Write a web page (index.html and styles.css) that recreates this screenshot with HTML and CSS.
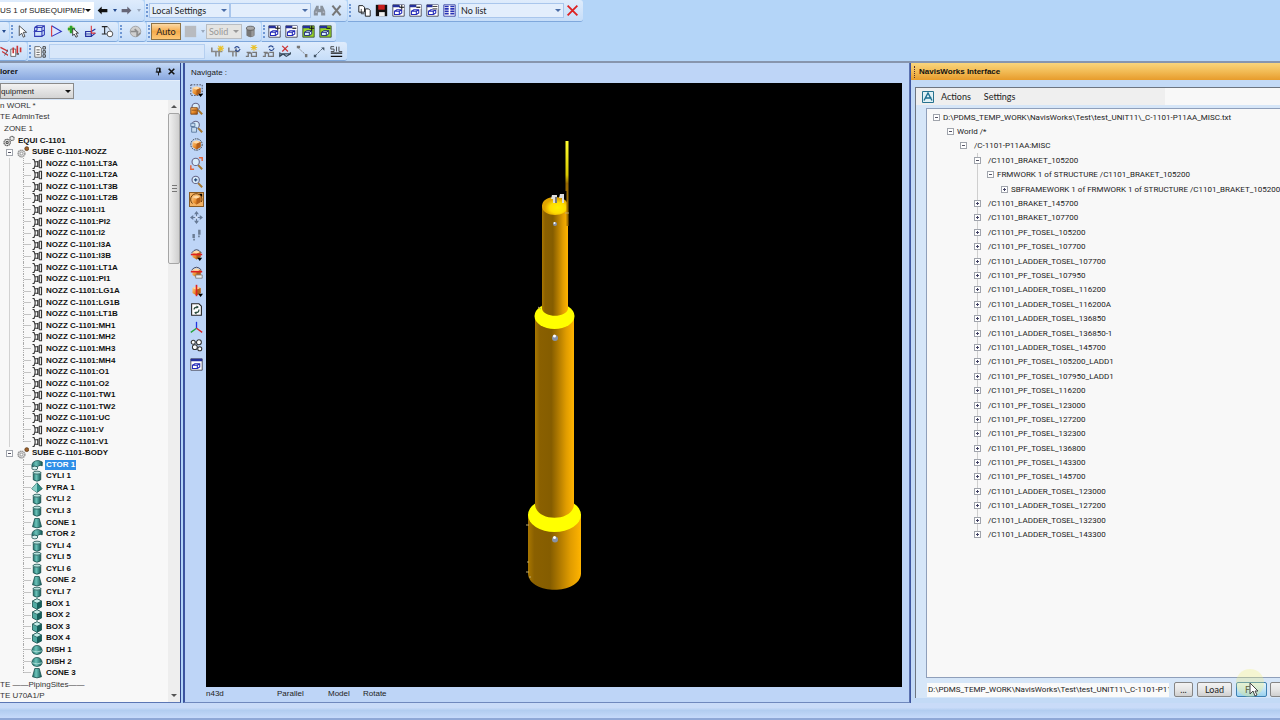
FILE: index.html
```html
<!DOCTYPE html>
<html lang="en">
<head>
  <meta charset="utf-8">
  <title>NavisWorks Interface</title>
  <link rel="stylesheet" href="styles.css">
</head>
<body>

<!-- icon set -->
<svg class="defs" aria-hidden="true">
  <defs>
    <linearGradient id="teal"><stop offset="0" stop-color="#1d6c68"/><stop offset=".4" stop-color="#6cc4ba"/><stop offset="1" stop-color="#145a58"/></linearGradient>
    <linearGradient id="orange" x2="1" y2="1"><stop offset="0" stop-color="#ffd59a"/><stop offset=".5" stop-color="#ea8f2e"/><stop offset="1" stop-color="#a3500f"/></linearGradient>
    <linearGradient id="steel"><stop offset="0" stop-color="#a87600"/><stop offset=".12" stop-color="#8a6000"/><stop offset=".42" stop-color="#855d00"/><stop offset=".6" stop-color="#b07a00"/><stop offset=".8" stop-color="#e09c00"/><stop offset="1" stop-color="#ffb400"/></linearGradient>
    <radialGradient id="dome" cx=".6" cy=".6"><stop offset="0" stop-color="#fff000"/><stop offset=".6" stop-color="#ffdc00"/><stop offset="1" stop-color="#e0a400"/></radialGradient>
    <linearGradient id="mast" x2="0" y2="1"><stop offset="0" stop-color="#ffff30"/><stop offset=".4" stop-color="#d8c800"/><stop offset=".5" stop-color="#946600"/><stop offset="1" stop-color="#a87400"/></linearGradient>
  </defs>
  <symbol id="back" viewBox="0 0 16 16"><path d="M2 8l5-5v3h7v4H7v3z" fill="#111"/></symbol>
  <symbol id="fwd" viewBox="0 0 16 16"><path d="M14 8L9 3v3H2v4h7v3z" fill="#667"/></symbol>
  <symbol id="binoc" viewBox="0 0 16 16"><path d="M4 2h3v4h2V2h3l3 7v5h-5v-4H6v4H1V9z" fill="#8a929c"/><path d="M3 10h2M12 10h2" stroke="#dde" /></symbol>
  <symbol id="cross" viewBox="0 0 16 16"><path d="M3 2l10 12M13 2L3 14" stroke="#777" stroke-width="2.6"/></symbol>
  <symbol id="redx" viewBox="0 0 16 16"><path d="M2 2l12 12M14 2L2 14" stroke="#d22" stroke-width="2.2"/></symbol>
  <symbol id="copy" viewBox="0 0 16 16"><path d="M1 2h5l2 2v6H1zM9 6h4l2 2v7H9z" fill="#fff" stroke="#222" stroke-width="1.2"/><path d="M4 6v6h4" fill="none" stroke="#222"/></symbol>
  <symbol id="save" viewBox="0 0 16 16"><path d="M1 1h14v14H1z" fill="#111"/><path d="M4 1h8v6H4z" fill="#c81e1e"/><path d="M5 10h7v5H5z" fill="#eee"/></symbol>
  <symbol id="win" viewBox="0 0 16 16"><path d="M1 1h14v14H1z" fill="#fff" stroke="#334"/><path d="M1 1h14v3H1z" fill="#24309a"/><path d="M3 9h6v4H3zM3 9l3-2h6v4l-3 2M9 9l3-2" fill="none" stroke="#2229b8" stroke-width="1.3"/></symbol>
  <symbol id="winplus" viewBox="0 0 16 16"><use href="#win"/><path d="M9 1h6v6h-3z" fill="#fff"/><path d="M12 1v6M9 4h6" stroke="#111" stroke-width="1.2"/></symbol>
  <symbol id="winminus" viewBox="0 0 16 16"><use href="#win"/><path d="M9 1h6v5H9z" fill="#fff"/><path d="M9 4h5" stroke="#111" stroke-width="1.4"/></symbol>
  <symbol id="wineq" viewBox="0 0 16 16"><use href="#win"/><path d="M8 1h7v6H8z" fill="#fff"/><path d="M8 3h6M8 6h6" stroke="#111"/></symbol>
  <symbol id="gwin" viewBox="0 0 16 16"><path d="M1 1h14v14H1z" fill="#98d426" stroke="#343"/><path d="M1 1h9v3H1z" fill="#24309a"/><path d="M3 9h6v4H3zM3 9l3-2h6v4l-3 2M9 9l3-2" fill="#d9f2ff" stroke="#22297a" stroke-width="1.2"/></symbol>
  <symbol id="gplus" viewBox="0 0 16 16"><use href="#gwin"/><path d="M12 1v6M9 4h6" stroke="#111" stroke-width="1.4"/></symbol>
  <symbol id="gminus" viewBox="0 0 16 16"><use href="#gwin"/><path d="M9 4h5" stroke="#111" stroke-width="1.4"/></symbol>
  <symbol id="list" viewBox="0 0 16 16"><path d="M1 1h14v14H1z" fill="#fff" stroke="#24309a"/><path d="M2 3h5M2 6h5M2 9h5M2 12h5M9 3h5M9 6h5M9 9h5M9 12h5" stroke="#2631b5" stroke-width="2"/></symbol>
  <symbol id="cursor" viewBox="0 0 16 16"><path d="M4 1v12l3-3 2 5 2-1-2-5h4z" fill="#fff" stroke="#333"/></symbol>
  <symbol id="stack" viewBox="0 0 16 16"><path d="M5 1h9v5l-3 2H2l3-2zM2 3l3-2M2 3v5M2 3h9l3-2M11 3v5M2 8v6h9V8M11 14l3-2V6" fill="none" stroke="#303ab4" stroke-width="1.3"/></symbol>
  <symbol id="tri" viewBox="0 0 16 16"><path d="M2 1l12 7-12 6" fill="#dce6ff" stroke="#3039c0" stroke-width="1.3"/><path d="M2 1v13" stroke="#d33" stroke-width="1.3"/></symbol>
  <symbol id="pick" viewBox="0 0 16 16"><circle cx="5" cy="5" r="4" fill="#c8d64a" opacity=".6"/><path d="M1 5h9M5 1v9" stroke="#2ba32b" stroke-width="3"/><path d="M7 4v9l2-2 2 4 2-1-2-4h3z" fill="#fff" stroke="#222"/></symbol>
  <symbol id="axes" viewBox="0 0 16 16"><path d="M2 8h7v6H2zM9 8l5-3M9 14l5-4" fill="none" stroke="#25309e" stroke-width="1.4"/><path d="M9 1v9M9 10h5" stroke="#d33" stroke-width="1.3"/><path d="M1 11h8" stroke="#25309e"/></symbol>
  <symbol id="io" viewBox="0 0 16 16"><path d="M1 2h7M4.500 2v9M1 11h6" fill="none" stroke="#222" stroke-width="1.3"/><circle cx="11" cy="11" r="3.500" fill="#fff" stroke="#333"/><path d="M8 2l4 5" stroke="#666"/></symbol>
  <symbol id="globe" viewBox="0 0 16 16"><circle cx="8" cy="8" r="6.500" fill="#cfcfcf" stroke="#999"/><path d="M2 8h8l-3-3M10 8v5l4-3" fill="none" stroke="#8c8c8c" stroke-width="2"/></symbol>
  <symbol id="square" viewBox="0 0 16 16"><path d="M1 1h14v14H1z" fill="#b8bbc0"/></symbol>
  <symbol id="drum" viewBox="0 0 16 16"><path d="M3 4v9q5 4 10 0V4z" fill="#777"/><path d="M9 4h3v10H9z" fill="#999"/><ellipse cx="8" cy="4" rx="5" ry="2.500" fill="#aaa" stroke="#555"/></symbol>
  <symbol id="reddoc" viewBox="0 0 16 16"><path d="M1 5h6v9H1z" fill="#fff" stroke="#555"/><path d="M4 3v7M9 1v9M13 3v6" stroke="#c33" stroke-width="2"/><path d="M8 11h3" stroke="#555" stroke-width="2"/></symbol>
  <symbol id="redo" viewBox="0 0 16 16"><path d="M3 3l10 5M5 8l8 5" stroke="#c33" stroke-width="1.600"/><path d="M8 13l6-10" stroke="#456" /></symbol>
  <symbol id="report" viewBox="0 0 16 16"><path d="M1 2h6l2 2v11H1z" fill="#fff" stroke="#555"/><path d="M3 6h4M3 9h4M3 12h4" stroke="#333"/><path d="M11 2h3v3h-3zM11 7h3v3h-3zM11 12h3v3h-3z" fill="none" stroke="#444" stroke-width="1.200"/></symbol>
  <symbol id="pipe" viewBox="0 0 16 16"><path d="M1 3v5h5v6M6 8h4v6M10 4v4h4" fill="none" stroke="#888" stroke-width="2"/></symbol>
  <symbol id="pipenew" viewBox="0 0 16 16"><use href="#pipe"/><path d="M12 1v7M8 4h8M9 1l6 6M15 1L9 7" stroke="#e9c12b" stroke-width="1.300"/></symbol>
  <symbol id="pipemod" viewBox="0 0 16 16"><use href="#pipe"/><path d="M8 4q3-4 6 0M15 5q-3 5-6 1" fill="none" stroke="#23428a" stroke-width="1.400"/></symbol>
  <symbol id="br" viewBox="0 0 16 16"><path d="M1 14h3v-4h4v4h6V9H9M2 9h5" fill="none" stroke="#777" stroke-width="1.600"/></symbol>
  <symbol id="brnew" viewBox="0 0 16 16"><use href="#br"/><path d="M11 0v7M7 3h8M8 0l6 6M14 0L8 6" stroke="#e9c12b" stroke-width="1.300"/></symbol>
  <symbol id="brmod" viewBox="0 0 16 16"><use href="#br"/><path d="M8 3q3-4 6 0M15 4q-3 5-6 1" fill="none" stroke="#23428a" stroke-width="1.400"/></symbol>
  <symbol id="brdel" viewBox="0 0 16 16"><path d="M1 9v5l4-3 4 3 5-3V9M1 11h13" fill="none" stroke="#345" stroke-width="1.400"/><path d="M4 1l7 7M11 1L4 8" stroke="#c33" stroke-width="1.500"/></symbol>
  <symbol id="down" viewBox="0 0 16 16"><path d="M2 3l10 9" stroke="#777" stroke-dasharray="2 1"/><path d="M1 1h4v3H1zM11 11h3v4h-3z" fill="#777"/></symbol>
  <symbol id="up" viewBox="0 0 16 16"><path d="M2 14L13 3" stroke="#456" stroke-dasharray="4 1"/><path d="M10 3h4v4zM1 12h3v3H1z" fill="#456"/></symbol>
  <symbol id="lines" viewBox="0 0 16 16"><path d="M1 2h4M1 2v3h4v3H1M8 2v6M11 2v6h4" fill="none" stroke="#333"/><path d="M1 10h14M1 14h14" stroke="#111" stroke-width="1.500"/></symbol>
  <symbol id="pin" viewBox="0 0 16 16"><path d="M5 2h6v7H5zM3 9h10M8 9v6" fill="none" stroke="#111" stroke-width="1.600"/><path d="M9 2h2v7H9z"/></symbol>
  <symbol id="close" viewBox="0 0 16 16"><path d="M3 3l10 10M13 3L3 13" stroke="#111" stroke-width="2.800"/></symbol>

  <symbol id="gears" viewBox="0 0 16 16"><g fill="#eee" stroke="#555" stroke-width="1.500"><circle cx="5.500" cy="10" r="4.200" stroke-dasharray="2 .6"/><circle cx="5.500" cy="10" r="1.500"/><circle cx="12" cy="4.500" r="2.800" stroke-dasharray="1.500 .5"/></g></symbol>
  <symbol id="subgear" viewBox="0 0 16 16"><circle cx="6" cy="10" r="4.500" fill="#ddd" stroke="#999" stroke-width="2" stroke-dasharray="2 .6"/><circle cx="6" cy="10" r="1.800" fill="#fff" stroke="#888"/><circle cx="13" cy="3.500" r="2.600" fill="#a0622a" stroke="#53300e"/></symbol>
  <symbol id="nozz" viewBox="0 0 16 16"><path d="M2 2h2q3 6 0 12H2M5 5h4M5 11h4M9 4v8M11 3v10M11 3h3v10h-3" fill="none" stroke="#333" stroke-width="1.500"/></symbol>
  <symbol id="ctor" viewBox="0 0 16 16"><path d="M1 10q0-8 9-8l5 2v5q-6-2-7 4z" fill="url(#teal)" stroke="#164a48"/><ellipse cx="5" cy="12" rx="4" ry="2.500" fill="#d8f0ee" stroke="#164a48"/></symbol>
  <symbol id="cyli" viewBox="0 0 16 16"><path d="M3 3v10q5 4 10 0V3z" fill="url(#teal)" stroke="#164a48"/><ellipse cx="8" cy="3.500" rx="5" ry="2" fill="#b7e2dd" stroke="#164a48"/></symbol>
  <symbol id="pyra" viewBox="0 0 16 16"><path d="M8 1l7 8-7 5-7-5z" fill="#2c8d86" stroke="#164a48"/><path d="M8 1v13l-7-5z" fill="#8ad0c8"/></symbol>
  <symbol id="cone" viewBox="0 0 16 16"><path d="M5 2h6l3 11q-6 3-12 0z" fill="url(#teal)" stroke="#164a48"/></symbol>
  <symbol id="box" viewBox="0 0 16 16"><path d="M8 1l6 3v8l-6 3-6-3V4z" fill="#4fa9a1" stroke="#164a48"/><path d="M8 1l6 3-6 3-6-3z" fill="#c6ece8" stroke="#164a48" stroke-width=".8"/><path d="M8 7v8l6-3V4z" fill="#175e5a"/></symbol>
  <symbol id="dish" viewBox="0 0 16 16"><path d="M1 9q1-7 7-7t7 7q-1 5-7 5T1 9z" fill="url(#teal)" stroke="#164a48"/><path d="M1 9q7 3 14 0" fill="none" stroke="#bfe8e3"/></symbol>

  <symbol id="obox" viewBox="0 0 16 16"><path d="M8 3l5 2v6l-5 3-5-3V5z" fill="url(#orange)"/><path d="M8 3l5 2-5 2-5-2z" fill="#ffdba8"/><path d="M8 7v7l5-3V5z" fill="#b4601a"/></symbol>
  <symbol id="n-sel" viewBox="0 0 16 16"><path d="M1 1h14v13H1z" fill="none" stroke="#334" stroke-dasharray="2 1.500"/><use href="#obox"/><path d="M10 12h6l-3 4z"/></symbol>
  <symbol id="glass" viewBox="0 0 16 16"><path d="M10 10l5 5" stroke="#a8792f" stroke-width="2.500"/><circle cx="7" cy="6" r="4.500" fill="#d8ecfb" stroke="#668" stroke-width="1.400"/></symbol>
  <symbol id="n-zin" viewBox="0 0 16 16"><use href="#glass"/><path d="M1 7h8v8H1z" fill="url(#orange)" stroke="#7a3d0c"/><path d="M2 10h6" stroke="#7a3d0c"/></symbol>
  <symbol id="n-zout" viewBox="0 0 16 16"><use href="#glass"/><path d="M1 4h5v4H1zM2 9h6v6H2z" fill="#c3d9ee" stroke="#4f6f96"/></symbol>
  <symbol id="n-all" viewBox="0 0 16 16"><circle cx="8" cy="8" r="7" fill="none" stroke="#222" stroke-dasharray="2 1"/><use href="#obox"/></symbol>
  <symbol id="n-ext" viewBox="0 0 16 16"><use href="#glass"/><path d="M11 1h4v4M1 10v5h4" fill="none" stroke="#e4663a" stroke-width="1.800"/></symbol>
  <symbol id="n-mag" viewBox="0 0 16 16"><use href="#glass"/><path d="M7 4v4M5 6h4" stroke="#247" stroke-width="1.300"/></symbol>
  <symbol id="n-rot" viewBox="0 0 16 16"><use href="#obox"/><path d="M3 13A7 7 0 1 1 14 11" fill="none" stroke="#6a3b0a" stroke-width="1.200"/><path d="M11 1h4v4z"/></symbol>
  <symbol id="n-pan" viewBox="0 0 16 16"><path d="M8 2v12M2 8h12" stroke="#667a96" stroke-width="1.300"/><path d="M8 0l3 4H5zM8 16l3-4H5zM0 8l4-3v6zM16 8l-4-3v6z" fill="#667a96"/><circle cx="8" cy="8" r="1.500" fill="#dfebff"/></symbol>
  <symbol id="n-walk" viewBox="0 0 16 16"><path d="M3 6h3v5H3zM4 12h2v2H4zM10 1h3v6h-3zM10 8h2v2h-2z" fill="#6b7d94"/></symbol>
  <symbol id="n-clip" viewBox="0 0 16 16"><use href="#obox"/><path d="M1 8h14" stroke="#d22" stroke-width="2"/><path d="M2 6q6-8 12 0" fill="none" stroke="#334"/><path d="M9 12h6l-3 4z"/></symbol>
  <symbol id="n-clip2" viewBox="0 0 16 16"><use href="#obox"/><path d="M1 7h14" stroke="#d22" stroke-width="2"/><path d="M2 5q6-7 12 0" fill="none" stroke="#334"/><path d="M7 11h8v4H7z" fill="#eee" stroke="#777"/></symbol>
  <symbol id="n-cut" viewBox="0 0 16 16"><use href="#obox"/><path d="M8 1v14" stroke="#d22" stroke-width="2"/><path d="M10 12h6l-3 4z"/></symbol>
  <symbol id="n-ref" viewBox="0 0 16 16"><path d="M2 1h9l3 3v11H2z" fill="#fff" stroke="#222" stroke-width="1.300"/><path d="M5 8q0-3 4-3M11 8q0 4-4 4" fill="none" stroke="#284a3c" stroke-width="1.500"/><path d="M8 3l3 2-3 2zM8 10v4l-3-2z" fill="#284a3c"/></symbol>
  <symbol id="n-axis" viewBox="0 0 16 16"><path d="M8 9V1" stroke="#2233dd" stroke-width="1.600"/><path d="M8 9l-7 5" stroke="#23a53a" stroke-width="1.600"/><path d="M8 9l7 5" stroke="#d22" stroke-width="1.600"/></symbol>
  <symbol id="n-link" viewBox="0 0 16 16"><g fill="#fff" stroke="#333" stroke-width="1.300"><circle cx="4" cy="4" r="2.500"/><circle cx="11" cy="4" r="3"/><circle cx="6" cy="10" r="3"/><circle cx="12" cy="12" r="2.500"/></g></symbol>
</svg>

<div class="app">
  <header class="toolbars">
    <div class="row">
      <div class="strip">
        <span class="combo c-cur"><select aria-label="Current element"><option>US 1 of SUBEQUIPMENT</option></select></span>
        <button class="ico" aria-label="Back"><svg><use href="#back"/></svg></button>
        <button class="dd" aria-label="Back history"></button>
        <button class="ico" aria-label="Forward"><svg><use href="#fwd"/></svg></button>
        <button class="dd off" aria-label="Forward history"></button>
      </div>
      <div class="strip grip">
        <span class="combo c-set"><select aria-label="Settings"><option>Local Settings</option></select></span>
        <span class="combo c-set"><select aria-label="Search in"><option></option></select></span>
        <button class="ico" aria-label="Find"><svg><use href="#binoc"/></svg></button>
        <button class="ico" aria-label="Clear"><svg><use href="#cross"/></svg></button>
      </div>
      <div class="strip grip">
        <span class="space"></span>
        <button class="ico" aria-label="Copy"><svg><use href="#copy"/></svg></button>
        <button class="ico" aria-label="Save"><svg><use href="#save"/></svg></button>
        <button class="ico" aria-label="Add to list"><svg><use href="#winplus"/></svg></button>
        <button class="ico" aria-label="Remove from list"><svg><use href="#winminus"/></svg></button>
        <button class="ico" aria-label="Replace list"><svg><use href="#wineq"/></svg></button>
        <button class="ico" aria-label="Lists"><svg><use href="#list"/></svg></button>
        <span class="combo c-list"><select aria-label="List"><option>No list</option></select></span>
        <button class="ico" aria-label="Delete list"><svg><use href="#redx"/></svg></button>
      </div>
    </div>

    <div class="row">
      <div class="strip">
        <button class="dd" aria-label="More"></button>
      </div>
      <div class="strip grip">
        <button class="ico" aria-label="Select"><svg><use href="#cursor"/></svg></button>
        <button class="ico" aria-label="Model editor"><svg><use href="#stack"/></svg></button>
        <button class="ico" aria-label="Direction"><svg><use href="#tri"/></svg></button>
        <button class="ico" aria-label="Pick"><svg><use href="#pick"/></svg></button>
        <button class="ico" aria-label="Axes"><svg><use href="#axes"/></svg></button>
        <button class="ico" aria-label="Measure"><svg><use href="#io"/></svg></button>
      </div>
      <div class="strip grip">
        <span class="space"></span>
        <button class="ico" aria-label="Refresh" disabled><svg><use href="#globe"/></svg></button>
      </div>
      <div class="strip grip">
        <button class="auto">Auto</button>
        <button class="ico" aria-label="Colour" disabled><svg><use href="#square"/></svg></button>
        <button class="dd off" aria-label="Colours"></button>
        <span class="combo c-solid"><select aria-label="Fill" disabled><option>Solid</option></select></span>
        <button class="ico" aria-label="Translucency"><svg><use href="#drum"/></svg></button>
      </div>
      <div class="strip grip">
        <button class="ico" aria-label="Add element"><svg><use href="#winplus"/></svg></button>
        <button class="ico" aria-label="Remove element"><svg><use href="#winminus"/></svg></button>
        <button class="ico" aria-label="Add connected"><svg><use href="#gplus"/></svg></button>
        <button class="ico" aria-label="Remove connected"><svg><use href="#gminus"/></svg></button>
      </div>
    </div>

    <div class="row">
      <div class="strip">
        <button class="ico half" aria-label="Redo"><svg><use href="#redo"/></svg></button>
        <button class="ico" aria-label="Compare"><svg><use href="#reddoc"/></svg></button>
      </div>
      <div class="strip grip">
        <button class="ico" aria-label="Report"><svg><use href="#report"/></svg></button>
        <input class="cmd" type="text" aria-label="Name">
        <span class="space"></span>
        <button class="ico" aria-label="Create pipe"><svg><use href="#pipenew"/></svg></button>
        <button class="ico" aria-label="Modify pipe"><svg><use href="#pipemod"/></svg></button>
        <button class="ico" aria-label="Create branch"><svg><use href="#brnew"/></svg></button>
        <button class="ico" aria-label="Modify branch"><svg><use href="#brmod"/></svg></button>
        <button class="ico" aria-label="Delete branch"><svg><use href="#brdel"/></svg></button>
        <button class="ico" aria-label="Connect head"><svg><use href="#down"/></svg></button>
        <button class="ico" aria-label="Connect tail"><svg><use href="#up"/></svg></button>
        <button class="ico" aria-label="Slope"><svg><use href="#lines"/></svg></button>
      </div>
    </div>
  </header>

  <main>
    <section class="explorer">
      <h2 class="bar">lorer
        <span class="tools">
          <button class="ico" aria-label="Pin"><svg><use href="#pin"/></svg></button>
          <button class="ico" aria-label="Close"><svg><use href="#close"/></svg></button>
        </span>
      </h2>
      <div class="filter"><span class="combo c-type"><select aria-label="Element type"><option>quipment</option></select></span></div>
      <div class="pane">
        <ul class="model">
          <li class="plain">n WORL *</li>
          <li class="plain">TE AdminTest</li>
          <li class="plain zone">ZONE 1</li>
          <li class="equi"><svg><use href="#gears"/></svg>EQUI C-1101</li>
          <li class="sube"><i class="exp"></i><svg><use href="#subgear"/></svg>SUBE C-1101-NOZZ</li>
          <li class="leaf in"><svg><use href="#nozz"/></svg>NOZZ C-1101:LT3A</li>
          <li class="leaf in"><svg><use href="#nozz"/></svg>NOZZ C-1101:LT2A</li>
          <li class="leaf in"><svg><use href="#nozz"/></svg>NOZZ C-1101:LT3B</li>
          <li class="leaf in"><svg><use href="#nozz"/></svg>NOZZ C-1101:LT2B</li>
          <li class="leaf in"><svg><use href="#nozz"/></svg>NOZZ C-1101:I1</li>
          <li class="leaf in"><svg><use href="#nozz"/></svg>NOZZ C-1101:PI2</li>
          <li class="leaf in"><svg><use href="#nozz"/></svg>NOZZ C-1101:I2</li>
          <li class="leaf in"><svg><use href="#nozz"/></svg>NOZZ C-1101:I3A</li>
          <li class="leaf in"><svg><use href="#nozz"/></svg>NOZZ C-1101:I3B</li>
          <li class="leaf in"><svg><use href="#nozz"/></svg>NOZZ C-1101:LT1A</li>
          <li class="leaf in"><svg><use href="#nozz"/></svg>NOZZ C-1101:PI1</li>
          <li class="leaf in"><svg><use href="#nozz"/></svg>NOZZ C-1101:LG1A</li>
          <li class="leaf in"><svg><use href="#nozz"/></svg>NOZZ C-1101:LG1B</li>
          <li class="leaf in"><svg><use href="#nozz"/></svg>NOZZ C-1101:LT1B</li>
          <li class="leaf in"><svg><use href="#nozz"/></svg>NOZZ C-1101:MH1</li>
          <li class="leaf in"><svg><use href="#nozz"/></svg>NOZZ C-1101:MH2</li>
          <li class="leaf in"><svg><use href="#nozz"/></svg>NOZZ C-1101:MH3</li>
          <li class="leaf in"><svg><use href="#nozz"/></svg>NOZZ C-1101:MH4</li>
          <li class="leaf in"><svg><use href="#nozz"/></svg>NOZZ C-1101:O1</li>
          <li class="leaf in"><svg><use href="#nozz"/></svg>NOZZ C-1101:O2</li>
          <li class="leaf in"><svg><use href="#nozz"/></svg>NOZZ C-1101:TW1</li>
          <li class="leaf in"><svg><use href="#nozz"/></svg>NOZZ C-1101:TW2</li>
          <li class="leaf in"><svg><use href="#nozz"/></svg>NOZZ C-1101:UC</li>
          <li class="leaf in"><svg><use href="#nozz"/></svg>NOZZ C-1101:V</li>
          <li class="leaf in last"><svg><use href="#nozz"/></svg>NOZZ C-1101:V1</li>
          <li class="sube"><i class="exp"></i><svg><use href="#subgear"/></svg>SUBE C-1101-BODY</li>
          <li class="leaf"><svg><use href="#ctor"/></svg><span class="selected">CTOR 1</span></li>
          <li class="leaf"><svg><use href="#cyli"/></svg>CYLI 1</li>
          <li class="leaf"><svg><use href="#pyra"/></svg>PYRA 1</li>
          <li class="leaf"><svg><use href="#cyli"/></svg>CYLI 2</li>
          <li class="leaf"><svg><use href="#cyli"/></svg>CYLI 3</li>
          <li class="leaf"><svg><use href="#cone"/></svg>CONE 1</li>
          <li class="leaf"><svg><use href="#ctor"/></svg>CTOR 2</li>
          <li class="leaf"><svg><use href="#cyli"/></svg>CYLI 4</li>
          <li class="leaf"><svg><use href="#cyli"/></svg>CYLI 5</li>
          <li class="leaf"><svg><use href="#cyli"/></svg>CYLI 6</li>
          <li class="leaf"><svg><use href="#cone"/></svg>CONE 2</li>
          <li class="leaf"><svg><use href="#cyli"/></svg>CYLI 7</li>
          <li class="leaf"><svg><use href="#box"/></svg>BOX 1</li>
          <li class="leaf"><svg><use href="#box"/></svg>BOX 2</li>
          <li class="leaf"><svg><use href="#box"/></svg>BOX 3</li>
          <li class="leaf"><svg><use href="#box"/></svg>BOX 4</li>
          <li class="leaf"><svg><use href="#dish"/></svg>DISH 1</li>
          <li class="leaf"><svg><use href="#dish"/></svg>DISH 2</li>
          <li class="leaf last"><svg><use href="#cone"/></svg>CONE 3</li>
          <li class="plain">TE ——PipingSites——</li>
          <li class="plain">TE U70A1/P</li>
        </ul>
        <div class="scroll">
          <button class="sbtn" aria-label="Scroll up"></button>
          <div class="thumb"></div>
          <button class="sbtn dn" aria-label="Scroll down"></button>
        </div>
      </div>
    </section>

    <section class="view">
      <div class="caption">Navigate :</div>
      <div class="stage">
        <nav class="side">
          <button aria-label="Zoom to selection"><svg><use href="#n-sel"/></svg></button>
          <button aria-label="Zoom in"><svg><use href="#n-zin"/></svg></button>
          <button aria-label="Zoom out"><svg><use href="#n-zout"/></svg></button>
          <button aria-label="Walk to drawlist"><svg><use href="#n-all"/></svg></button>
          <button class="gap" aria-label="Zoom extents"><svg><use href="#n-ext"/></svg></button>
          <button aria-label="Magnify"><svg><use href="#n-mag"/></svg></button>
          <button class="on" aria-label="Rotate"><svg><use href="#n-rot"/></svg></button>
          <button aria-label="Pan"><svg><use href="#n-pan"/></svg></button>
          <button aria-label="Walk"><svg><use href="#n-walk"/></svg></button>
          <button class="gap" aria-label="Clip"><svg><use href="#n-clip"/></svg></button>
          <button aria-label="Clip box"><svg><use href="#n-clip2"/></svg></button>
          <button aria-label="Cut"><svg><use href="#n-cut"/></svg></button>
          <button class="gap" aria-label="Refresh view"><svg><use href="#n-ref"/></svg></button>
          <button aria-label="Axes"><svg><use href="#n-axis"/></svg></button>
          <button aria-label="Links"><svg><use href="#n-link"/></svg></button>
          <button class="gap" aria-label="New view"><svg><use href="#win"/></svg></button>
        </nav>
        <svg class="model3d" viewBox="206 83 696 604" role="img" aria-label="Column C-1101">
          <path d="M528 514v60c2 21 51 21 53 0v-60z" fill="url(#steel)"/>
          <ellipse cx="554.500" cy="515" rx="26.500" ry="17" fill="#ffff00"/>
          <path d="M535 316v189c2 17 37 17 39 0V316z" fill="url(#steel)"/>
          <ellipse cx="554.500" cy="316" rx="20" ry="13" fill="#ffff00"/>
          <path d="M542 205v104c2 9 24 9 26 0V205z" fill="url(#steel)"/>
          <path d="M542 206c0-12 26-12 26 0s-26 12-26 0z" fill="url(#dome)"/>
          <path d="M565.500 141h3v85h-2v-35h-1z" fill="url(#mast)"/>
          <path d="M565 213h4M538 307l3 2M526 525h3M526 572h3M527 562h2M529 577h2" stroke="#bda86a"/>
          <g fill="#ddd"><path d="M552 195h5v8h-4v-4h-2zM560 194h4v9h-2v-5h-3z"/><path d="M555 197h2v6h-2z" fill="#777"/></g>
          <g fill="#8792a8"><circle cx="555" cy="224" r="2"/><circle cx="555" cy="338" r="3"/><circle cx="555" cy="539.500" r="3"/></g>
          <g fill="#fff"><circle cx="554.500" cy="223" r="1"/><circle cx="554.500" cy="336" r="1.500"/><circle cx="554.500" cy="537.500" r="1.500"/></g>
        </svg>
      </div>
      <div class="state"><span class="s1">n43d</span><span class="s2">Parallel</span><span class="s3">Model</span><span>Rotate</span></div>
    </section>

    <section class="navis">
      <h2 class="bar hot">NavisWorks Interface</h2>
      <div class="frame">
        <div class="menu">
          <svg class="logo" viewBox="0 0 12 12"><path d="M.5.5h11v11H.5z" fill="#dff0f5" stroke="#27728f"/><path d="M2 9.500L6 2l4 7.500M3.500 7h6" fill="none" stroke="#1d6f91" stroke-width="1.400"/></svg>
          <button>Actions</button>
          <button>Settings</button>
        </div>
        <div class="files">
          <ul>
            <li class="l0"><i class="exp"></i>D:\PDMS_TEMP_WORK\NavisWorks\Test\test_UNIT11\_C-1101-P11AA_MISC.txt</li>
            <li class="l1"><i class="exp"></i>World /*</li>
            <li class="l2"><i class="exp"></i>/C-1101-P11AA:MISC</li>
            <li class="l3"><i class="exp"></i>/C1101_BRAKET_105200</li>
            <li class="l4"><i class="exp"></i>FRMWORK 1 of STRUCTURE /C1101_BRAKET_105200</li>
            <li class="l5"><i class="exp plus"></i>SBFRAMEWORK 1 of FRMWORK 1 of STRUCTURE /C1101_BRAKET_105200</li>
            <li class="l3"><i class="exp plus"></i>/C1101_BRAKET_145700</li>
            <li class="l3"><i class="exp plus"></i>/C1101_BRAKET_107700</li>
            <li class="l3"><i class="exp plus"></i>/C1101_PF_TOSEL_105200</li>
            <li class="l3"><i class="exp plus"></i>/C1101_PF_TOSEL_107700</li>
            <li class="l3"><i class="exp plus"></i>/C1101_LADDER_TOSEL_107700</li>
            <li class="l3"><i class="exp plus"></i>/C1101_PF_TOSEL_107950</li>
            <li class="l3"><i class="exp plus"></i>/C1101_LADDER_TOSEL_116200</li>
            <li class="l3"><i class="exp plus"></i>/C1101_LADDER_TOSEL_116200A</li>
            <li class="l3"><i class="exp plus"></i>/C1101_LADDER_TOSEL_136850</li>
            <li class="l3"><i class="exp plus"></i>/C1101_LADDER_TOSEL_136850-1</li>
            <li class="l3"><i class="exp plus"></i>/C1101_LADDER_TOSEL_145700</li>
            <li class="l3"><i class="exp plus"></i>/C1101_PF_TOSEL_105200_LADD1</li>
            <li class="l3"><i class="exp plus"></i>/C1101_PF_TOSEL_107950_LADD1</li>
            <li class="l3"><i class="exp plus"></i>/C1101_PF_TOSEL_116200</li>
            <li class="l3"><i class="exp plus"></i>/C1101_PF_TOSEL_123000</li>
            <li class="l3"><i class="exp plus"></i>/C1101_PF_TOSEL_127200</li>
            <li class="l3"><i class="exp plus"></i>/C1101_PF_TOSEL_132300</li>
            <li class="l3"><i class="exp plus"></i>/C1101_PF_TOSEL_136800</li>
            <li class="l3"><i class="exp plus"></i>/C1101_PF_TOSEL_143300</li>
            <li class="l3"><i class="exp plus"></i>/C1101_PF_TOSEL_145700</li>
            <li class="l3"><i class="exp plus"></i>/C1101_LADDER_TOSEL_123000</li>
            <li class="l3"><i class="exp plus"></i>/C1101_LADDER_TOSEL_127200</li>
            <li class="l3"><i class="exp plus"></i>/C1101_LADDER_TOSEL_132300</li>
            <li class="l3 last"><i class="exp plus"></i>/C1101_LADDER_TOSEL_143300</li>
          </ul>
        </div>
        <div class="actions">
          <input type="text" aria-label="File path" value="D:\PDMS_TEMP_WORK\NavisWorks\Test\test_UNIT11\_C-1101-P11AA_MISC.txt">
          <button class="btn browse">...</button>
          <button class="btn load">Load</button>
          <span class="target">
            <button class="btn find">F</button>
            <span class="halo"></span>
            <svg class="mouse" viewBox="0 0 10 15"><path d="M1 1v11l3-3 2 5 2-1-2-4h3z" fill="#fff" stroke="#444"/></svg>
          </span>
          <button class="btn more" aria-label="More"></button>
        </div>
      </div>
    </section>
  </main>

  <footer></footer>
</div>
</body>
</html>
```
FILE: styles.css
```css
/* Global */

* {
  box-sizing: border-box;
}

html, body {
  height: 100%;
  margin: 0;
  overflow: hidden;
}

body {
  font-family: "Liberation Sans", Arial, sans-serif;
  font-size: 8px;
  color: #222;
  background: #b4d5f8;
}

button, input, select {
  font: inherit;
  color: inherit;
  margin: 0;
  padding: 0;
  border: 0;
  border-radius: 0;
  background: none;
  outline: none;
}

ul {
  list-style: none;
  margin: 0;
  padding: 0;
}

/* kept rendered so the gradients stay usable */
.defs {
  position: absolute;
  width: 0;
  height: 0;
}

.app {
  height: 100vh;
  display: flex;
  flex-direction: column;
}

/* Toolbars */

.toolbars {
  font-family: Lato, sans-serif;
  font-size: 9px;
  border-bottom: 2px solid #8795ad;
}

.row {
  display: flex;
  height: 22px;
}

.row + .row {
  height: 20px;
}

.row:last-child {
  height: 19px;
}

.strip {
  display: flex;
  align-items: center;
  padding-right: 2px;
  background: linear-gradient(#dfecfc, #c6ddf8);
  border-bottom: 1px solid #7fa8dc;
  border-radius: 0 3px 3px 0;
}

.grip {
  margin-left: 1px;
}

.grip::before {
  content: '';
  height: 13px;
  margin: 0 1px;
  border-left: 2px dotted #6f97d3;
}

.space {
  width: 4px;
}

.ico {
  display: flex;
  align-items: center;
  justify-content: center;
  width: 17px;
  height: 17px;
  flex: none;
}

.ico svg {
  width: 13px;
  height: 13px;
  flex: none;
}

.half {
  width: 8px;
  overflow: hidden;
}

.dd {
  width: 7px;
  height: 12px;
  display: flex;
  align-items: center;
  justify-content: center;
}

.dd::before {
  content: '';
  border: 2px solid transparent;
  border-top: 3px solid #234a8e;
  border-bottom: 0;
}

.dd.off::before {
  border-top-color: #9aa9bd;
}

.combo {
  display: flex;
  align-items: center;
  height: 15px;
  padding: 0 2px;
  background: #e3eefc;
  border: 1px solid #a9c6ec;
}

.combo::after {
  content: '';
  border: 3px solid transparent;
  border-top: 3px solid #4a6da7;
  border-bottom: 0;
}

.combo select {
  flex: 1;
  min-width: 0;
  height: 13px;
  appearance: none;
}

.c-cur {
  width: 94px;
  height: 17px;
  padding: 0 3px 0 0;
  background: #fff;
  border: 0;
  font-family: "Liberation Sans", Arial, sans-serif;
  font-size: 8px;
}

.c-cur::after, .c-type::after {
  border-top-color: #111;
}

.c-set {
  width: 81px;
}

.c-list {
  width: 106px;
}

.c-solid {
  width: 36px;
  background: #e4e4e2;
  border-color: #b9bdc2;
  color: #999;
}

.c-solid select {
  opacity: 1;
}

.c-solid::after {
  border-top-color: #999;
}

.auto {
  width: 30px;
  height: 17px;
  margin-right: 1px;
  background: linear-gradient(#fbd9a6, #f5ab4b 50%, #fdc877);
  border: 1px solid #8e7346;
}

.cmd {
  width: 156px;
  height: 15px;
  background: #d8e7fa;
  border: 1px solid #b5cff0;
}

/* Panels */

main {
  flex: 1;
  min-height: 0;
  display: grid;
  grid-template-columns: 181px minmax(0, 1fr) 370px;
}

.bar {
  display: flex;
  align-items: center;
  justify-content: space-between;
  height: 17px;
  margin: 0;
  font-size: 8px;
  color: #111;
  background: linear-gradient(#c4d9f6, #88a7df);
  flex: none;
}

.tools {
  display: flex;
}

.tools .ico {
  width: 13px;
}

.tools .ico svg {
  width: 9px;
  height: 9px;
}

.explorer {
  display: flex;
  flex-direction: column;
  min-height: 0;
  background: #d5e5f8;
  border-right: 1px solid #2f458f;
  border-bottom: 1px solid #5b76b4;
}

.explorer .bar {
  padding-right: 2px;
}

.filter {
  padding: 2px 0 1px;
  border-top: 1px solid #e4eefb;
}

.c-type {
  width: 74px;
  height: 16px;
  padding-left: 0;
  background: linear-gradient(#f2f2f2, #d4d4d4);
  border-color: #8a8a8a;
}

.pane {
  flex: 1;
  min-height: 0;
  display: flex;
  background: #f8f8f8;
}

/* Model tree, rows share the height of the pane */

.model {
  flex: 1;
  display: flex;
  flex-direction: column;
  font-weight: bold;
  color: #111;
}

.model li {
  flex: 1;
  min-height: 0;
  display: flex;
  align-items: center;
  white-space: nowrap;
  line-height: 10px;
}

.model svg {
  width: 12px;
  height: 12px;
  margin-right: 3px;
  flex: none;
}

.model .plain {
  font-weight: normal;
  color: #333;
}

.model .zone {
  padding-left: 4px;
}

.equi {
  padding-left: 3px;
}

.sube {
  padding-left: 6px;
}

.sube svg {
  margin-left: 1px;
}

.leaf {
  padding-left: 23px;
}

.leaf::before {
  content: '';
  align-self: stretch;
  width: 7px;
  border-left: 1px dotted #aaa;
  background: linear-gradient(#c4c4c4, #c4c4c4) 0 50% / 100% 1px no-repeat;
}

.leaf.last::before {
  align-self: flex-start;
  height: 6px;
  background-position: 0 100%;
}

.leaf.in {
  background: linear-gradient(#d2d2d2, #d2d2d2) 9px 0 / 1px 100% no-repeat;
}

.selected {
  margin-left: -1px;
  padding: 0 1px;
  color: #fff;
  background: #2f8fe8;
}

.exp {
  width: 7px;
  height: 7px;
  margin-right: 3px;
  flex: none;
  border: 1px solid #a0a4ac;
  background: linear-gradient(#556, #556) 50% 50% / 3px 1px no-repeat, #fff;
}

.exp.plus {
  background: linear-gradient(#446, #446) 50% 50% / 3px 1px no-repeat, linear-gradient(#446, #446) 50% 50% / 1px 3px no-repeat, #fff;
}

.scroll {
  width: 12px;
  display: flex;
  flex-direction: column;
  background: #eeeeee;
}

.sbtn {
  height: 13px;
  display: flex;
  align-items: center;
  justify-content: center;
}

.sbtn::before {
  content: '';
  border: 3px solid transparent;
  border-bottom: 3px solid #555;
  border-top: 0;
}

.sbtn.dn {
  margin-top: auto;
}

.sbtn.dn::before {
  border-top: 3px solid #555;
  border-bottom: 0;
}

.thumb {
  height: 25%;
  background: linear-gradient(#777, #777) 50% 48% / 5px 1px no-repeat, linear-gradient(#777, #777) 50% 50% / 5px 1px no-repeat, linear-gradient(#777, #777) 50% 52% / 5px 1px no-repeat, linear-gradient(90deg, #f0f0f0, #cfcfcf);
  border: 1px solid #a5a5a5;
  border-radius: 2px;
}

/* 3D view */

.view {
  margin-left: 2px;
  display: flex;
  flex-direction: column;
  min-height: 0;
  background: #bed5f7;
  border-left: 2px solid #3d549f;
  border-right: 1px solid #5c72b0;
  border-bottom: 1px solid #6f88bd;
}

.caption {
  padding: 5px 0 0 6px;
  height: 20px;
}

.stage {
  flex: 1;
  min-height: 0;
  display: flex;
  padding-right: 7px;
}

.side {
  width: 21px;
  padding-left: 2px;
  display: flex;
  flex-direction: column;
  align-items: center;
  gap: 3px;
}

.side button {
  display: flex;
  align-items: center;
  justify-content: center;
  width: 15px;
  height: 15px;
}

.side .gap {
  margin-top: 1px;
}

.side .on {
  background: #f3b264;
  border: 1px solid #8a5a22;
}

.side svg {
  width: 13px;
  height: 13px;
  flex: none;
}

.model3d {
  flex: 1;
  min-width: 0;
  height: 100%;
  background: #000;
}

.state {
  display: flex;
  height: 15px;
  padding: 2px 0 0 21px;
}

.s1 {
  width: 71px;
}

.s2 {
  width: 51px;
}

.s3 {
  width: 35px;
}

/* NavisWorks panel */

.navis {
  display: flex;
  flex-direction: column;
  min-width: 0;
  min-height: 0;
  overflow: hidden;
  background: #c3daf6;
  border-left: 1px solid #3d549f;
  font-family: Roboto, sans-serif;
}

.bar.hot {
  padding-left: 3px;
  justify-content: flex-start;
  font-family: "Liberation Sans", Arial, sans-serif;
  background: linear-gradient(#f9d57c, #f2bb55 50%, #e79c2c);
}

.bar.hot::before {
  content: '';
  height: 12px;
  margin-right: 4px;
  border-left: 1px dotted #533;
}

.frame {
  flex: 1;
  min-height: 0;
  display: flex;
  flex-direction: column;
  margin: 7px 0 5px 4px;
  background: #d6e6f8;
  border-left: 1px solid #6d7580;
  border-top: 1px solid #6d7580;
}

.menu {
  display: flex;
  align-items: center;
  height: 17px;
  padding-left: 6px;
  font-family: Lato, sans-serif;
  font-size: 9px;
  background: linear-gradient(90deg, #efefef 249px, #f8f8f8 249px);
}

.logo {
  width: 12px;
  height: 12px;
  margin-right: 7px;
}

.menu button {
  margin-right: 13px;
}

.files {
  flex: 1;
  min-height: 0;
  margin: 3px 0 0 10px;
  background: #f8f8f8;
  border: 1px solid #8f9fba;
  border-right: 0;
}

.files ul {
  height: 76%;
  margin-top: 1px;
  display: flex;
  flex-direction: column;
}

.files li {
  flex: 1;
  display: flex;
  align-items: center;
  white-space: nowrap;
}

.l0 { padding-left: 6px; }
.l1 { padding-left: 20px; }
.l2 { padding-left: 33px; }
.l3 { padding-left: 47px; }
.l4 { padding-left: 60px; }
.l5 { padding-left: 74px; }

.files .l3 .exp, .files .l2 .exp {
  margin-right: 7px;
}

.l3, .l4, .l5 {
  background: linear-gradient(#cfcfcf, #cfcfcf) 50px 0 / 1px 100% no-repeat;
}

.l3.last {
  background-size: 1px 50%;
}

.actions {
  display: flex;
  align-items: center;
  height: 20px;
  padding: 3px 0 0 11px;
}

.actions input {
  width: 242px;
  height: 14px;
  padding-left: 1px;
  flex: none;
  background: #fafafa;
}

.btn {
  height: 15px;
  flex: none;
  background: linear-gradient(#f3f3f3, #e6e6e6 50%, #cfcfcf);
  border: 1px solid #858585;
  border-radius: 2px;
  font-family: Lato, sans-serif;
  font-size: 9px;
  line-height: 12px;
}

.browse {
  width: 19px;
  margin-left: 5px;
}

.load {
  width: 35px;
  margin: 0 4px;
}

.find {
  width: 31px;
  padding-right: 8px;
  background: linear-gradient(#e4f4fc, #c4e5f6 50%, #98d1ef);
  border-color: #3c7fb1;
}

.more {
  width: 30px;
  margin-left: 3px;
}

/* pointer lies over the button */
.target {
  position: relative;
  display: flex;
  flex: none;
}

.halo {
  position: absolute;
  left: 0;
  top: -13px;
  width: 28px;
  height: 28px;
  border-radius: 50%;
  background: rgba(238, 240, 120, .3);
}

.mouse {
  position: absolute;
  left: 13px;
  top: 0;
  width: 10px;
  height: 15px;
}

footer {
  height: 17px;
  background: linear-gradient(#c9dbf8 30%, #b2cdf0 50%, #c6dafa);
  border-bottom: 2px solid #8fa8d6;
}
```
